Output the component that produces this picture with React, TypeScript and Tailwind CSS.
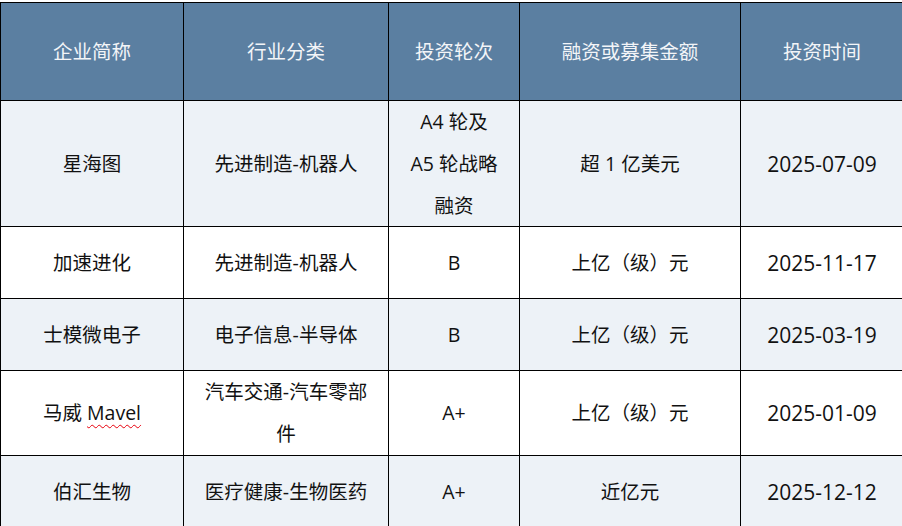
import type { ReactNode } from "react";

type Row = {
  name: ReactNode;
  industry: ReactNode;
  round: ReactNode;
  amount: string;
  date: string;
  height: string;
  shaded: boolean;
};

const rows: Row[] = [
  {
    name: "星海图",
    industry: "先进制造-机器人",
    round: (
      <>
        A4 轮及
        <br />
        A5 轮战略
        <br />
        融资
      </>
    ),
    amount: "超 1 亿美元",
    date: "2025-07-09",
    height: "h-[126px]",
    shaded: true,
  },
  {
    name: "加速进化",
    industry: "先进制造-机器人",
    round: "B",
    amount: "上亿（级）元",
    date: "2025-11-17",
    height: "h-[72px]",
    shaded: false,
  },
  {
    name: "士模微电子",
    industry: "电子信息-半导体",
    round: "B",
    amount: "上亿（级）元",
    date: "2025-03-19",
    height: "h-[72px]",
    shaded: true,
  },
  {
    name: (
      <>
        马威{" "}
        <span className="underline decoration-wavy decoration-red-600 decoration-1 underline-offset-4">
          Mavel
        </span>
      </>
    ),
    industry: (
      <>
        汽车交通-汽车零部
        <br />
        件
      </>
    ),
    round: "A+",
    amount: "上亿（级）元",
    date: "2025-01-09",
    height: "h-[85px]",
    shaded: false,
  },
  {
    name: "伯汇生物",
    industry: "医疗健康-生物医药",
    round: "A+",
    amount: "近亿元",
    date: "2025-12-12",
    height: "h-[72px]",
    shaded: true,
  },
];

const headers = ["企业简称", "行业分类", "投资轮次", "融资或募集金额", "投资时间"];

const cell =
  "flex items-center justify-center border-r border-b border-black text-center leading-[42px]";

export default function App() {
  return (
    <div
      className="h-[526px] w-[902px] overflow-hidden bg-white pt-[2px]"
      style={{ fontFamily: '"Open Sans", "Noto Sans CJK SC", sans-serif' }}
    >
      <div className="grid w-[904px] grid-cols-[183px_205px_131px_221px_163px] border-t border-l border-black text-[19.5px]">
        {headers.map((h) => (
          <div key={h} className={`${cell} h-[98px] bg-[#5b7fa1] text-[#f3f5f8]`}>
            {h}
          </div>
        ))}

        {rows.map((r, i) => {
          const bg = r.shaded ? "bg-[#edf2f7]" : "bg-white";
          const cls = `${cell} ${r.height} ${bg} text-[#111]`;
          return (
            <div key={i} className="contents">
              <div className={cls}>
                <span>{r.name}</span>
              </div>
              <div className={cls}>
                <span>{r.industry}</span>
              </div>
              <div className={cls}>
                <span>{r.round}</span>
              </div>
              <div className={cls}>
                <span>{r.amount}</span>
              </div>
              <div className={cls}>
                <span className="text-[21px]">{r.date}</span>
              </div>
            </div>
          );
        })}
      </div>
    </div>
  );
}
